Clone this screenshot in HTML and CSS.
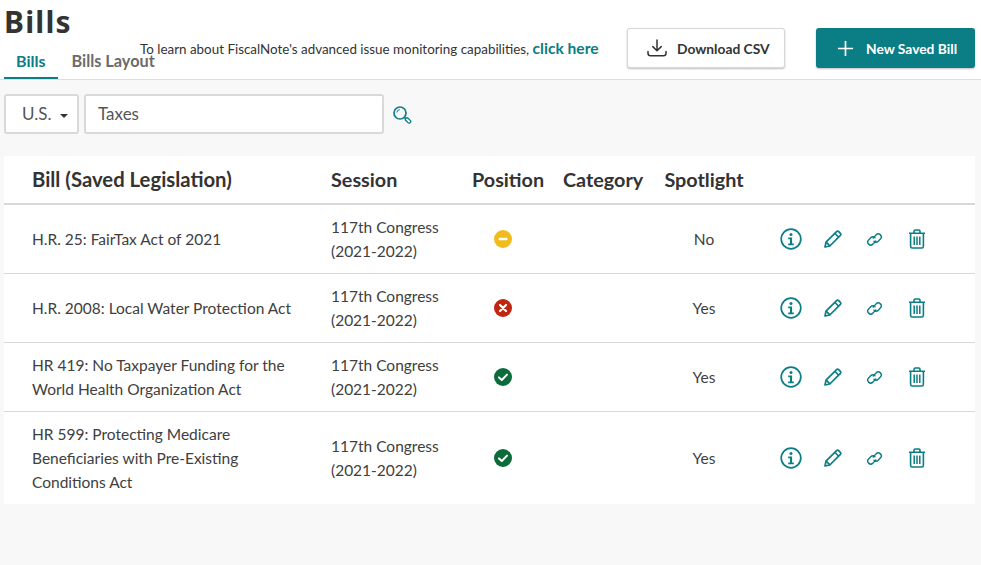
FILE: index.html
```html
<!DOCTYPE html>
<html lang="en">
<head>
<meta charset="utf-8">
<title>Bills</title>
<link rel="stylesheet" href="styles.css">
</head>
<body>
<svg class="defs" width="0" height="0" aria-hidden="true">
  <symbol id="i-info" viewBox="0 0 22 22">
    <circle cx="11" cy="11" r="9.800" fill="none" stroke="currentColor" stroke-width="1.700"/>
    <circle cx="11" cy="6.600" r="1.500" fill="currentColor"/>
    <path d="M8.200 9.600h3.900v6h1.700v1.600H8.200v-1.600h1.800v-4.400H8.200z" fill="currentColor"/>
  </symbol>
  <symbol id="i-edit" viewBox="0 0 20 20">
    <path d="M2 18l1-4.800L13.600 2.600a1.500 1.500 0 0 1 2.100 0l1.700 1.700a1.500 1.500 0 0 1 0 2.100L6.800 17z" fill="none" stroke="currentColor" stroke-width="1.700" stroke-linejoin="round"/>
    <path d="M12 4.500l3.500 3.500M3.200 13.200l3.600 3.600" fill="none" stroke="currentColor" stroke-width="1.700"/>
  </symbol>
  <symbol id="i-link" viewBox="0 0 18 18">
    <path d="M7.600 7.400l3.100-3.300a3.200 3.200 0 0 1 4.500 0 3.200 3.200 0 0 1 0 4.500l-2.200 2.300a3.200 3.200 0 0 1-4.500 0" fill="none" stroke="currentColor" stroke-width="1.500" stroke-linecap="round"/>
    <path d="M10.400 10.600l-3.100 3.300a3.200 3.200 0 0 1-4.500 0 3.200 3.200 0 0 1 0-4.500l2.200-2.300a3.200 3.200 0 0 1 4.500 0" fill="none" stroke="currentColor" stroke-width="1.500" stroke-linecap="round"/>
  </symbol>
  <symbol id="i-trash" viewBox="0 0 18 20">
    <path d="M1 4.200h16M6 4V2.200C6 1.500 6.500 1 7.200 1h3.600c.7 0 1.200.5 1.200 1.200V4" fill="none" stroke="currentColor" stroke-width="1.600"/>
    <path d="M2.600 4.500v12.800c0 .9.700 1.700 1.600 1.700h9.600c.9 0 1.600-.8 1.600-1.700V4.500" fill="none" stroke="currentColor" stroke-width="1.600"/>
    <path d="M6.200 7.500v8.500M9 7.500v8.500M11.800 7.500v8.500" fill="none" stroke="currentColor" stroke-width="1.500"/>
  </symbol>
  <symbol id="i-neutral" viewBox="0 0 18 18">
    <circle cx="9" cy="9" r="9" fill="#f2bb1c"/>
    <rect x="4.500" y="7.800" width="9" height="2.400" rx="1" fill="#fff"/>
  </symbol>
  <symbol id="i-oppose" viewBox="0 0 18 18">
    <circle cx="9" cy="9" r="9" fill="#c0260f"/>
    <path d="M6 6l6 6M12 6l-6 6" stroke="#fff" stroke-width="2.200" stroke-linecap="round"/>
  </symbol>
  <symbol id="i-support" viewBox="0 0 18 18">
    <circle cx="9" cy="9" r="9" fill="#0b6b3a"/>
    <path d="M5 9.400l2.800 2.600L13 6.600" fill="none" stroke="#fff" stroke-width="2" stroke-linecap="round" stroke-linejoin="round"/>
  </symbol>
</svg>

<header class="top">
  <div class="title-block">
    <h1 class="title">Bills</h1>
    <nav class="tabs">
      <a class="tab tab-active">Bills</a>
      <a class="tab">Bills Layout</a>
    </nav>
  </div>
  <p class="promo">To learn about FiscalNote's advanced issue monitoring capabilities, <a class="promo-link">click here</a></p>
  <div class="actions">
    <button class="btn btn-light">
      <svg class="btn-icon-dl" viewBox="0 0 20 18"><path d="M10 1v10.500M5.800 7.600l4.200 4.200 4.200-4.200M1 12.500v1.800c0 1.500 1 2.500 2.500 2.500h13c1.500 0 2.500-1 2.500-2.500v-1.800" fill="none" stroke="currentColor" stroke-width="1.500" stroke-linecap="round" stroke-linejoin="round"/></svg>
      Download CSV
    </button>
    <button class="btn btn-primary">
      <svg class="btn-icon-plus" viewBox="0 0 18 18"><path d="M9 1v16M1 9h16" fill="none" stroke="currentColor" stroke-width="1.800"/></svg>
      New Saved Bill
    </button>
  </div>
</header>

<section class="filters">
  <div class="select">U.S.<span class="caret"></span></div>
  <div class="search">Taxes</div>
  <svg class="search-icon" viewBox="0 0 20 20">
    <circle cx="8" cy="8" r="6" fill="none" stroke="currentColor" stroke-width="1.700"/>
    <path d="M4.800 7.500a3.500 3.500 0 0 1 3-3" fill="none" stroke="currentColor" stroke-width="1"/>
    <path d="M12.500 12.500l1.500 1.500" stroke="currentColor" stroke-width="1.700"/>
    <rect x="13" y="13.800" width="6.200" height="3.200" rx="1.600" transform="rotate(45 16 15.400)" fill="none" stroke="currentColor" stroke-width="1.300"/>
  </svg>
</section>

<table class="bills">
  <colgroup>
    <col class="c-bill"><col class="c-session"><col class="c-pos"><col class="c-cat"><col class="c-spot"><col class="c-act">
  </colgroup>
  <thead>
    <tr>
      <th class="cell-bill">Bill (Saved Legislation)</th>
      <th>Session</th>
      <th>Position</th>
      <th class="cell-cat">Category</th>
      <th class="cell-center">Spotlight</th>
      <th></th>
    </tr>
  </thead>
  <tbody>
    <tr>
      <td class="cell-bill">H.R. 25: FairTax Act of 2021</td>
      <td>117th Congress<br>(2021-2022)</td>
      <td><svg class="status"><use href="#i-neutral"/></svg></td>
      <td></td>
      <td class="cell-center">No</td>
      <td><div class="row-actions"><svg class="a-info"><use href="#i-info"/></svg><svg class="a-edit"><use href="#i-edit"/></svg><svg class="a-link"><use href="#i-link"/></svg><svg class="a-trash"><use href="#i-trash"/></svg></div></td>
    </tr>
    <tr>
      <td class="cell-bill">H.R. 2008: Local Water Protection Act</td>
      <td>117th Congress<br>(2021-2022)</td>
      <td><svg class="status"><use href="#i-oppose"/></svg></td>
      <td></td>
      <td class="cell-center">Yes</td>
      <td><div class="row-actions"><svg class="a-info"><use href="#i-info"/></svg><svg class="a-edit"><use href="#i-edit"/></svg><svg class="a-link"><use href="#i-link"/></svg><svg class="a-trash"><use href="#i-trash"/></svg></div></td>
    </tr>
    <tr>
      <td class="cell-bill">HR 419: No Taxpayer Funding for the<br>World Health Organization Act</td>
      <td>117th Congress<br>(2021-2022)</td>
      <td><svg class="status"><use href="#i-support"/></svg></td>
      <td></td>
      <td class="cell-center">Yes</td>
      <td><div class="row-actions"><svg class="a-info"><use href="#i-info"/></svg><svg class="a-edit"><use href="#i-edit"/></svg><svg class="a-link"><use href="#i-link"/></svg><svg class="a-trash"><use href="#i-trash"/></svg></div></td>
    </tr>
    <tr>
      <td class="cell-bill">HR 599: Protecting Medicare<br>Beneficiaries with Pre-Existing<br>Conditions Act</td>
      <td>117th Congress<br>(2021-2022)</td>
      <td><svg class="status"><use href="#i-support"/></svg></td>
      <td></td>
      <td class="cell-center">Yes</td>
      <td><div class="row-actions"><svg class="a-info"><use href="#i-info"/></svg><svg class="a-edit"><use href="#i-edit"/></svg><svg class="a-link"><use href="#i-link"/></svg><svg class="a-trash"><use href="#i-trash"/></svg></div></td>
    </tr>
  </tbody>
</table>
</body>
</html>
```

FILE: styles.css
```css
* { box-sizing: border-box; }
html, body { margin: 0; padding: 0; }
body {
  height: 565px;
  overflow: hidden;
  background: #f8f8f8;
  color: #333;
  font-family: Lato, "Liberation Sans", sans-serif;
  font-size: 16px;
}
.defs { position: absolute; }

.top {
  display: flex;
  height: 80px;
  background: #fff;
  border-bottom: 1px solid #ddd;
  padding-left: 4px;
}
.title-block { width: 136px; flex: none; }
.title {
  margin: 0;
  padding-top: 5px;
  font-family: "Noto Sans", sans-serif;
  font-size: 30px;
  line-height: 34px;
  font-weight: 700;
  letter-spacing: 1.200px;
  color: #333;
}
.tabs { display: flex; margin-top: 6px; white-space: nowrap; }
.tab {
  height: 34px;
  padding: 6px 13px 0 12px;
  font-size: 16px;
  line-height: 20px;
  font-weight: 700;
  color: #6b6b6b;
}
.tab + .tab { padding-left: 13px; font-size: 16.300px; }
.tab-active {
  color: #0b7d85;
  border-bottom: 2px solid #0b7d85;
}

.promo {
  margin: 38px 0 0;
  font-size: 13.400px;
  line-height: 20px;
  white-space: nowrap;
  color: #333;
  width: 487px;
  flex: none;
}
.promo-link { font-size: 15.600px; font-weight: 700; color: #0b7d85; }

.actions { display: flex; gap: 31px; margin-top: 28px; align-items: flex-start; }
.btn {
  display: flex;
  align-items: center;
  height: 40px;
  border-radius: 3px;
  font-family: inherit;
  font-size: 13.800px;
  font-weight: 700;
  padding: 0;
  box-shadow: 0 1px 2px rgba(0,0,0,.25);
  white-space: nowrap;
}
.btn-light { width: 158px; background: #fff; border: 1px solid #d8d8d8; color: #333; padding-left: 19px; gap: 10px; }
.btn-primary { width: 159px; background: #0b7d85; border: 0; color: #fff; padding-left: 21px; gap: 12px; }
.btn-icon-dl { width: 20px; height: 18px; }
.btn-icon-plus { width: 17px; height: 17px; }

.filters {
  display: flex;
  padding: 14px 0 0 4px;
  gap: 5px;
  height: 76px;
  align-items: flex-start;
}
.select, .search {
  height: 40px;
  background: #fff;
  border: 2px solid #d9d9d9;
  border-radius: 3px;
  font-size: 17px;
  line-height: 36px;
  color: #555;
}
.select { width: 75px; padding-left: 16px; position: relative; }
.caret {
  position: absolute;
  right: 9px;
  top: 18px;
  border-left: 4px solid transparent;
  border-right: 4px solid transparent;
  border-top: 4px solid #333;
}
.search { width: 300px; padding-left: 12px; }
.search-icon { width: 20px; height: 20px; margin: 11px 0 0 3px; color: #0b7d85; }

.bills {
  margin-left: 4px;
  width: 971px;
  table-layout: fixed;
  border-collapse: collapse;
  background: #fff;
}
.c-bill { width: 327px; }
.c-session { width: 141px; }
.c-pos { width: 71px; }
.c-cat { width: 121px; }
.c-spot { width: 80px; }
.c-act { width: 231px; }

th {
  height: 48px;
  text-align: left;
  font-size: 19.800px;
  font-weight: 700;
  color: #333;
  border-bottom: 2px solid #d8d8d8;
  padding: 0 0 2px;
  white-space: nowrap;
}
td {
  padding: 10px 0;
  font-size: 15.500px;
  line-height: 24px;
  color: #404040;
  border-bottom: 1px solid #d8d8d8;
  white-space: nowrap;
}
tbody tr:last-child td { border-bottom: 0; }
.cell-bill { padding-left: 28px; }
.cell-center { text-align: center; }
.cell-cat { padding-left: 20px; }
th.cell-bill { font-size: 20.300px; }
.status { display: block; width: 18px; height: 18px; margin-left: 22px; }
.row-actions { display: flex; align-items: center; padding-left: 36px; height: 24px; color: #0b7d85; }
.row-actions svg { flex: none; }
.a-info { width: 22px; height: 22px; }
.a-edit { width: 20px; height: 20px; margin-left: 21px; }
.a-link { width: 17px; height: 17px; margin-left: 23px; }
.a-trash { width: 18px; height: 20px; margin-left: 25px; }
```
